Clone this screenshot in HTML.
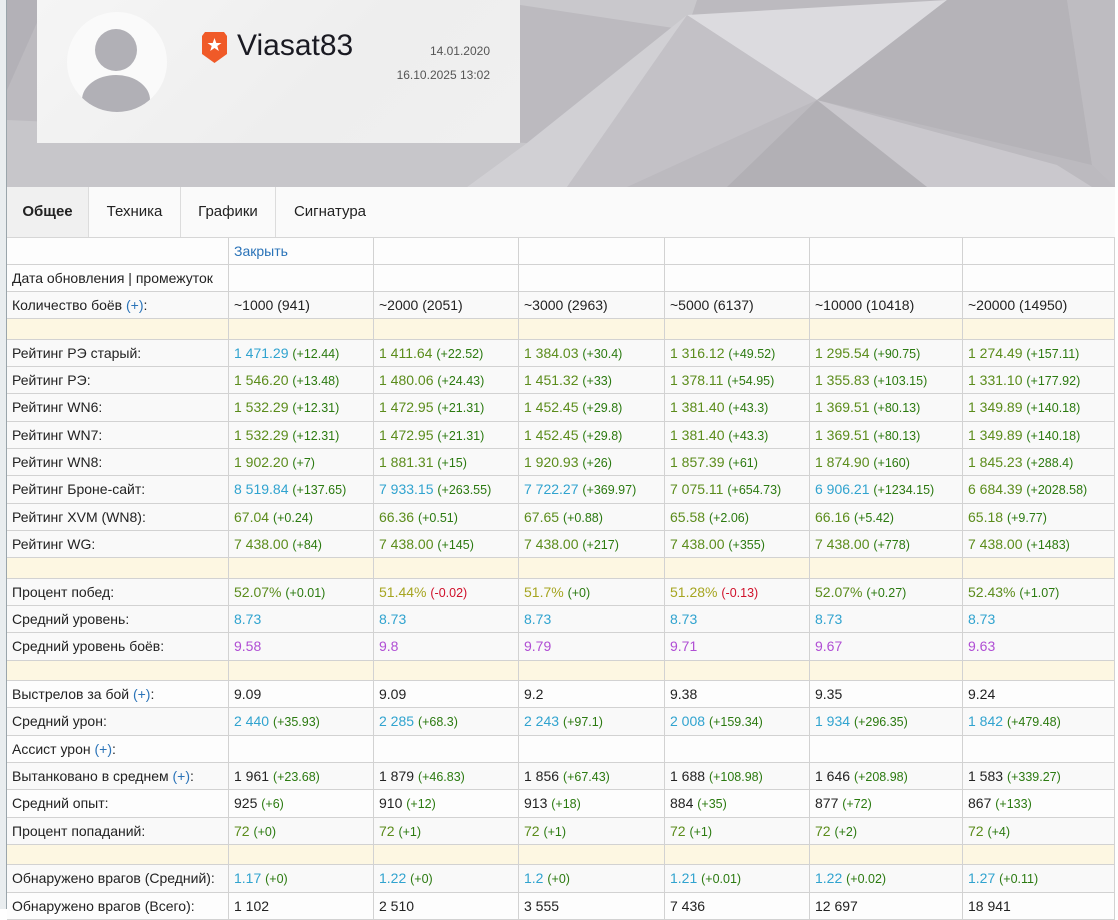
<!DOCTYPE html>
<html><head><meta charset="utf-8">
<style>
*{box-sizing:border-box;margin:0;padding:0}
body{width:1118px;height:909px;overflow:hidden;background:#fff;font-family:"Liberation Sans","DejaVu Sans",sans-serif;color:#222;position:relative}
#strip{position:absolute;left:0;top:0;width:7px;height:909px;background:#e9edef;border-right:1px solid #9aa5ab}
#hdr{position:absolute;left:7px;top:0;width:1108px;height:187px;overflow:hidden;background:#b9b7bc}
#card{position:absolute;left:30px;top:0;width:483px;height:143px;background:linear-gradient(135deg,#f5f5f5,#eeeeee 60%,#f0f0f0)}
#av{position:absolute;left:30px;top:12px;width:100px;height:100px;border-radius:50%;background:#fafafa;overflow:hidden}
#name{position:absolute;left:200px;top:29px;font-size:30px;color:#1a1a22}
.dt{position:absolute;right:30px;font-size:12px;color:#555}
#tabs{position:absolute;left:7px;top:187px;width:1108px;height:51px;background:#fafafa;border-bottom:1px solid #d6d6d6}
.tab{position:absolute;top:0;height:50px;line-height:50px;font-size:15px;text-align:center;border-right:1px solid #dcdcdc;color:#222}
#tbl{position:absolute;left:7px;top:237.5px;width:1108px}
.row{display:flex;height:27.3px;border-bottom:1px solid #d2d2d2;background:#f9f9f9}
.row.w{background:#fdfdfd}
.row.sep{height:20.5px;background:#fdf7e2}
.c{border-right:1px solid #d2d2d2;height:100%;font-size:14px;line-height:26px;padding-left:5px;white-space:nowrap;overflow:hidden}
.c0{width:222px}.c1{width:145px}.c2{width:145px}.c3{width:146px}.c4{width:145px}.c5{width:153px}.c6{width:152px}
.g{color:#5b8c1b}.b{color:#30a3cf}.p{color:#b04ed4}.y{color:#a6a520}.lk{color:#2a73b8}
.d{font-size:12.5px;color:#2b7a10}.r{font-size:12.5px;color:#d0102a}
</style></head><body>
<div id="strip"></div>
<div id="hdr">
<svg width="1108" height="187" style="position:absolute;left:0;top:0">
<polygon points="0,0 1108,0 1108,187 0,187" fill="#bcbabf"/>
<polygon points="480,0 690,0 680,30" fill="#c9c8cc"/>
<polygon points="680,15 940,0 810,100" fill="#dcdbdf"/>
<polygon points="680,15 810,100 620,187 560,187" fill="#c3c1c6"/>
<polygon points="810,100 1050,165 1085,187 830,187" fill="#cac8cd"/>
<polygon points="810,100 920,187 720,187" fill="#b2b0b5"/>
<polygon points="940,0 1060,0 1085,165 810,100" fill="#b5b3b8"/>
<polygon points="1060,0 1108,0 1108,187 1085,165" fill="#bebcc1"/>
<polygon points="0,120 520,143 460,187 0,187" fill="#c7c6ca"/>
<polygon points="520,143 680,15 560,187 460,187" fill="#d1d0d4"/>
<polygon points="0,0 40,0 0,90" fill="#b3b1b7"/>
</svg>
<div id="card">
<div id="av">
<div style="position:absolute;left:28px;top:17px;width:42px;height:42px;border-radius:50%;background:#b1b0b6"></div>
<div style="position:absolute;left:15px;top:63px;width:68px;height:50px;border-radius:50%;background:#b1b0b6"></div>
</div>
<svg style="position:absolute;left:165px;top:32px" width="25" height="31" viewBox="0 0 25 31"><path d="M3 0H22L25 4V22L12.5 31L0 22V4Z" fill="#f05a28"/><polygon points="12.5,6 14.3,11 19.5,11 15.3,14 16.8,19 12.5,16 8.2,19 9.7,14 5.5,11 10.7,11" fill="#fff"/></svg>
<div id="name">Viasat83</div>
<div class="dt" style="top:44px">14.01.2020</div>
<div class="dt" style="top:68px">16.10.2025 13:02</div>
</div>
</div>
<div id="tabs">
<div class="tab" style="left:0;width:82px;background:#f0f0f0;font-weight:bold">Общее</div>
<div class="tab" style="left:82px;width:92px">Техника</div>
<div class="tab" style="left:174px;width:95px">Графики</div>
<div class="tab" style="left:269px;width:108px;border-right:none">Сигнатура</div>
</div>
<div id="tbl">
<div class="row w"><div class="c c0"></div><div class="c c1 lk">Закрыть</div><div class="c c2"></div><div class="c c3"></div><div class="c c4"></div><div class="c c5"></div><div class="c c6"></div></div>
<div class="row w"><div class="c c0">Дата обновления | промежуток</div><div class="c c1"></div><div class="c c2"></div><div class="c c3"></div><div class="c c4"></div><div class="c c5"></div><div class="c c6"></div></div>
<div class="row"><div class="c c0">Количество боёв <span class="lk">(+)</span>:</div><div class="c c1">~1000 (941)</div><div class="c c2">~2000 (2051)</div><div class="c c3">~3000 (2963)</div><div class="c c4">~5000 (6137)</div><div class="c c5">~10000 (10418)</div><div class="c c6">~20000 (14950)</div></div>
<div class="row sep"><div class="c c0"></div><div class="c c1"></div><div class="c c2"></div><div class="c c3"></div><div class="c c4"></div><div class="c c5"></div><div class="c c6"></div></div>
<div class="row"><div class="c c0">Рейтинг РЭ старый:</div><div class="c c1"><span class="b">1 471.29</span> <span class="d">(+12.44)</span></div><div class="c c2"><span class="g">1 411.64</span> <span class="d">(+22.52)</span></div><div class="c c3"><span class="g">1 384.03</span> <span class="d">(+30.4)</span></div><div class="c c4"><span class="g">1 316.12</span> <span class="d">(+49.52)</span></div><div class="c c5"><span class="g">1 295.54</span> <span class="d">(+90.75)</span></div><div class="c c6"><span class="g">1 274.49</span> <span class="d">(+157.11)</span></div></div>
<div class="row"><div class="c c0">Рейтинг РЭ:</div><div class="c c1"><span class="g">1 546.20</span> <span class="d">(+13.48)</span></div><div class="c c2"><span class="g">1 480.06</span> <span class="d">(+24.43)</span></div><div class="c c3"><span class="g">1 451.32</span> <span class="d">(+33)</span></div><div class="c c4"><span class="g">1 378.11</span> <span class="d">(+54.95)</span></div><div class="c c5"><span class="g">1 355.83</span> <span class="d">(+103.15)</span></div><div class="c c6"><span class="g">1 331.10</span> <span class="d">(+177.92)</span></div></div>
<div class="row"><div class="c c0">Рейтинг WN6:</div><div class="c c1"><span class="g">1 532.29</span> <span class="d">(+12.31)</span></div><div class="c c2"><span class="g">1 472.95</span> <span class="d">(+21.31)</span></div><div class="c c3"><span class="g">1 452.45</span> <span class="d">(+29.8)</span></div><div class="c c4"><span class="g">1 381.40</span> <span class="d">(+43.3)</span></div><div class="c c5"><span class="g">1 369.51</span> <span class="d">(+80.13)</span></div><div class="c c6"><span class="g">1 349.89</span> <span class="d">(+140.18)</span></div></div>
<div class="row"><div class="c c0">Рейтинг WN7:</div><div class="c c1"><span class="g">1 532.29</span> <span class="d">(+12.31)</span></div><div class="c c2"><span class="g">1 472.95</span> <span class="d">(+21.31)</span></div><div class="c c3"><span class="g">1 452.45</span> <span class="d">(+29.8)</span></div><div class="c c4"><span class="g">1 381.40</span> <span class="d">(+43.3)</span></div><div class="c c5"><span class="g">1 369.51</span> <span class="d">(+80.13)</span></div><div class="c c6"><span class="g">1 349.89</span> <span class="d">(+140.18)</span></div></div>
<div class="row"><div class="c c0">Рейтинг WN8:</div><div class="c c1"><span class="g">1 902.20</span> <span class="d">(+7)</span></div><div class="c c2"><span class="g">1 881.31</span> <span class="d">(+15)</span></div><div class="c c3"><span class="g">1 920.93</span> <span class="d">(+26)</span></div><div class="c c4"><span class="g">1 857.39</span> <span class="d">(+61)</span></div><div class="c c5"><span class="g">1 874.90</span> <span class="d">(+160)</span></div><div class="c c6"><span class="g">1 845.23</span> <span class="d">(+288.4)</span></div></div>
<div class="row"><div class="c c0">Рейтинг Броне-сайт:</div><div class="c c1"><span class="b">8 519.84</span> <span class="d">(+137.65)</span></div><div class="c c2"><span class="b">7 933.15</span> <span class="d">(+263.55)</span></div><div class="c c3"><span class="b">7 722.27</span> <span class="d">(+369.97)</span></div><div class="c c4"><span class="g">7 075.11</span> <span class="d">(+654.73)</span></div><div class="c c5"><span class="b">6 906.21</span> <span class="d">(+1234.15)</span></div><div class="c c6"><span class="g">6 684.39</span> <span class="d">(+2028.58)</span></div></div>
<div class="row"><div class="c c0">Рейтинг XVM (WN8):</div><div class="c c1"><span class="g">67.04</span> <span class="d">(+0.24)</span></div><div class="c c2"><span class="g">66.36</span> <span class="d">(+0.51)</span></div><div class="c c3"><span class="g">67.65</span> <span class="d">(+0.88)</span></div><div class="c c4"><span class="g">65.58</span> <span class="d">(+2.06)</span></div><div class="c c5"><span class="g">66.16</span> <span class="d">(+5.42)</span></div><div class="c c6"><span class="g">65.18</span> <span class="d">(+9.77)</span></div></div>
<div class="row"><div class="c c0">Рейтинг WG:</div><div class="c c1"><span class="g">7 438.00</span> <span class="d">(+84)</span></div><div class="c c2"><span class="g">7 438.00</span> <span class="d">(+145)</span></div><div class="c c3"><span class="g">7 438.00</span> <span class="d">(+217)</span></div><div class="c c4"><span class="g">7 438.00</span> <span class="d">(+355)</span></div><div class="c c5"><span class="g">7 438.00</span> <span class="d">(+778)</span></div><div class="c c6"><span class="g">7 438.00</span> <span class="d">(+1483)</span></div></div>
<div class="row sep"><div class="c c0"></div><div class="c c1"></div><div class="c c2"></div><div class="c c3"></div><div class="c c4"></div><div class="c c5"></div><div class="c c6"></div></div>
<div class="row"><div class="c c0">Процент побед:</div><div class="c c1"><span class="g">52.07%</span> <span class="d">(+0.01)</span></div><div class="c c2"><span class="y">51.44%</span> <span class="r">(-0.02)</span></div><div class="c c3"><span class="y">51.7%</span> <span class="d">(+0)</span></div><div class="c c4"><span class="y">51.28%</span> <span class="r">(-0.13)</span></div><div class="c c5"><span class="g">52.07%</span> <span class="d">(+0.27)</span></div><div class="c c6"><span class="g">52.43%</span> <span class="d">(+1.07)</span></div></div>
<div class="row"><div class="c c0">Средний уровень:</div><div class="c c1 b">8.73</div><div class="c c2 b">8.73</div><div class="c c3 b">8.73</div><div class="c c4 b">8.73</div><div class="c c5 b">8.73</div><div class="c c6 b">8.73</div></div>
<div class="row"><div class="c c0">Средний уровень боёв:</div><div class="c c1 p">9.58</div><div class="c c2 p">9.8</div><div class="c c3 p">9.79</div><div class="c c4 p">9.71</div><div class="c c5 p">9.67</div><div class="c c6 p">9.63</div></div>
<div class="row sep"><div class="c c0"></div><div class="c c1"></div><div class="c c2"></div><div class="c c3"></div><div class="c c4"></div><div class="c c5"></div><div class="c c6"></div></div>
<div class="row w"><div class="c c0">Выстрелов за бой <span class="lk">(+)</span>:</div><div class="c c1">9.09</div><div class="c c2">9.09</div><div class="c c3">9.2</div><div class="c c4">9.38</div><div class="c c5">9.35</div><div class="c c6">9.24</div></div>
<div class="row"><div class="c c0">Средний урон:</div><div class="c c1"><span class="b">2 440</span> <span class="d">(+35.93)</span></div><div class="c c2"><span class="b">2 285</span> <span class="d">(+68.3)</span></div><div class="c c3"><span class="b">2 243</span> <span class="d">(+97.1)</span></div><div class="c c4"><span class="b">2 008</span> <span class="d">(+159.34)</span></div><div class="c c5"><span class="b">1 934</span> <span class="d">(+296.35)</span></div><div class="c c6"><span class="b">1 842</span> <span class="d">(+479.48)</span></div></div>
<div class="row w"><div class="c c0">Ассист урон <span class="lk">(+)</span>:</div><div class="c c1"></div><div class="c c2"></div><div class="c c3"></div><div class="c c4"></div><div class="c c5"></div><div class="c c6"></div></div>
<div class="row"><div class="c c0">Вытанковано в среднем <span class="lk">(+)</span>:</div><div class="c c1">1 961 <span class="d">(+23.68)</span></div><div class="c c2">1 879 <span class="d">(+46.83)</span></div><div class="c c3">1 856 <span class="d">(+67.43)</span></div><div class="c c4">1 688 <span class="d">(+108.98)</span></div><div class="c c5">1 646 <span class="d">(+208.98)</span></div><div class="c c6">1 583 <span class="d">(+339.27)</span></div></div>
<div class="row w"><div class="c c0">Средний опыт:</div><div class="c c1">925 <span class="d">(+6)</span></div><div class="c c2">910 <span class="d">(+12)</span></div><div class="c c3">913 <span class="d">(+18)</span></div><div class="c c4">884 <span class="d">(+35)</span></div><div class="c c5">877 <span class="d">(+72)</span></div><div class="c c6">867 <span class="d">(+133)</span></div></div>
<div class="row"><div class="c c0">Процент попаданий:</div><div class="c c1"><span class="g">72</span> <span class="d">(+0)</span></div><div class="c c2"><span class="g">72</span> <span class="d">(+1)</span></div><div class="c c3"><span class="g">72</span> <span class="d">(+1)</span></div><div class="c c4"><span class="g">72</span> <span class="d">(+1)</span></div><div class="c c5"><span class="g">72</span> <span class="d">(+2)</span></div><div class="c c6"><span class="g">72</span> <span class="d">(+4)</span></div></div>
<div class="row sep"><div class="c c0"></div><div class="c c1"></div><div class="c c2"></div><div class="c c3"></div><div class="c c4"></div><div class="c c5"></div><div class="c c6"></div></div>
<div class="row"><div class="c c0">Обнаружено врагов (Средний):</div><div class="c c1"><span class="b">1.17</span> <span class="d">(+0)</span></div><div class="c c2"><span class="b">1.22</span> <span class="d">(+0)</span></div><div class="c c3"><span class="b">1.2</span> <span class="d">(+0)</span></div><div class="c c4"><span class="b">1.21</span> <span class="d">(+0.01)</span></div><div class="c c5"><span class="b">1.22</span> <span class="d">(+0.02)</span></div><div class="c c6"><span class="b">1.27</span> <span class="d">(+0.11)</span></div></div>
<div class="row w"><div class="c c0">Обнаружено врагов (Всего):</div><div class="c c1">1 102</div><div class="c c2">2 510</div><div class="c c3">3 555</div><div class="c c4">7 436</div><div class="c c5">12 697</div><div class="c c6">18 941</div></div>
</div>
</body></html>
